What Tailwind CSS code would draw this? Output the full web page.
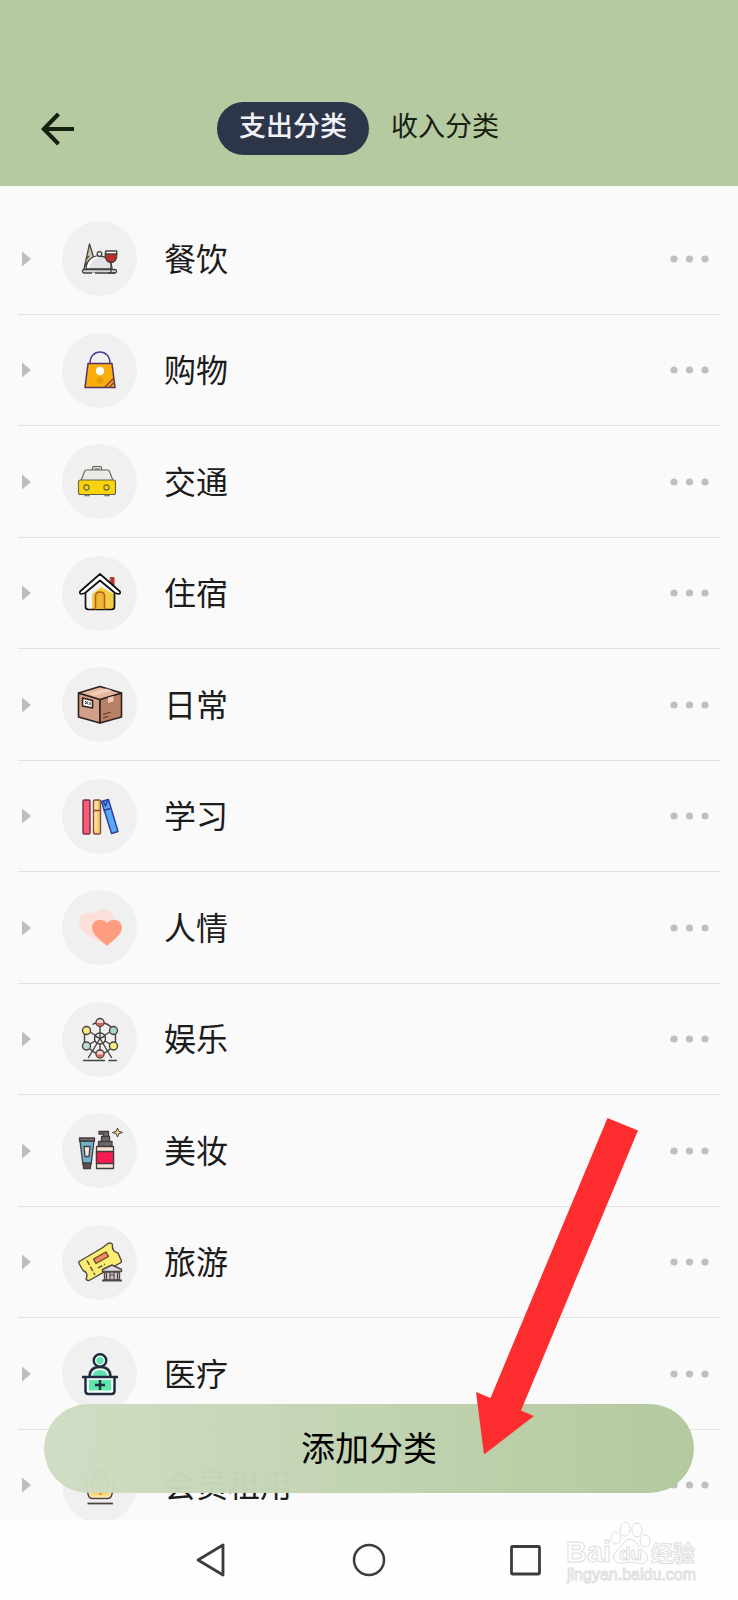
<!DOCTYPE html>
<html lang="zh-CN">
<head>
    <meta charset="UTF-8">
    <meta name="viewport" content="width=device-width, initial-scale=1.0">
    <title>分类管理</title>
    <script src="https://cdn.jsdelivr.net/npm/@tailwindcss/browser@4"></script>
</head>
<body class="relative h-screen flex flex-col overflow-hidden bg-[#fafafa] text-[#1c1c1c] font-['Noto_Sans_CJK_SC',sans-serif]">
    <!-- Header -->
    <header class="flex shrink-0 items-center bg-[#b5caa1] px-[41px] pt-[102px] pb-[31px]">
        <div class="flex-1">
            <button aria-label="返回" class="block">
                <svg width="34" height="34" viewBox="0 0 34 34" fill="none" stroke="#17200f" stroke-width="4"><path d="M33 17H3M17.500 2L2.800 17l14.700 15"/></svg>
            </button>
        </div>
        <nav class="flex text-[27px] leading-[46px]">
            <button class="rounded-full bg-[#2d3549] px-[22px] pb-[7px] font-medium text-[#f2f3f8]">支出分类</button>
            <button class="rounded-full px-[22px] pb-[7px] text-[#17200f]">收入分类</button>
        </nav>
        <div class="flex-1"></div>
    </header>

    <!-- Category list -->
    <main class="relative min-h-0 flex-1 overflow-hidden pt-[17px]">
        <ul id="list" class="mx-[18px]">
            <li class="flex h-[111px] odd:h-[112px] items-center border-b border-[#e2e2e2]">
                <svg class="ml-[4px] shrink-0" width="9" height="16" viewBox="0 0 9 16"><path d="M0 .5L9 8 0 15.500z" fill="#bdbdbd"/></svg>
                <span class="ml-[31px] flex size-[75px] shrink-0 items-center justify-center rounded-full bg-[#f0f0f0]">
                    <svg width="48" height="48" viewBox="0 0 48 48" fill="none" stroke="#45403e" stroke-width="1.300" stroke-linejoin="round">
                        <path d="M8 34L13.500 9l4 13" fill="#cfc5ae"/>
                        <path d="M10 24l3-3M9 30l4-4"/>
                        <path d="M10 34c0-8 6-13 13-13s13 5 13 13z" fill="#e1e3e7"/>
                        <path d="M12 33c1-7 5-10 10-11" stroke="#fff" stroke-width="2"/>
                        <circle cx="23.500" cy="19" r="2.300" fill="#eee"/>
                        <rect x="6.500" y="34.500" width="34" height="3.500" rx="1.700" fill="#d5d6db"/>
                        <path d="M29.500 17h11c1 6-1 10.500-5.500 10.500S28.500 23 29.500 17z" fill="#bd2f2a"/>
                        <path d="M29.700 16h11v3h-11z" fill="#fff"/>
                        <path d="M35 28v9M32 38h7"/>
                        <path d="M16 38.500h3" stroke="#f0f0f0" stroke-width="2"/>
                    </svg>
                </span>
                <span class="ml-[27px] flex-1 pb-[4px] text-[32px] leading-[48px]">餐饮</span>
                <button aria-label="更多" class="mr-[11px]"><svg width="40" height="8" viewBox="0 0 40 8" fill="#bfbfbf"><circle cx="5" cy="4" r="3.600"/><circle cx="20.500" cy="4" r="3.600"/><circle cx="36" cy="4" r="3.600"/></svg></button>
            </li>
            <li class="flex h-[111px] odd:h-[112px] items-center border-b border-[#e2e2e2]">
                <svg class="ml-[4px] shrink-0" width="9" height="16" viewBox="0 0 9 16"><path d="M0 .5L9 8 0 15.500z" fill="#bdbdbd"/></svg>
                <span class="ml-[31px] flex size-[75px] shrink-0 items-center justify-center rounded-full bg-[#f0f0f0]">
                    <svg width="48" height="48" viewBox="0 0 48 48" fill="none" stroke="#553069" stroke-width="1.500" stroke-linejoin="round">
                        <path d="M14 17.500C14 10 18.500 6 24 6s10 4 10 11.500" stroke="#4d3c99"/>
                        <path d="M12 17.500h24L39 41.500H9z" fill="#fbae0b"/>
                        <circle cx="24" cy="25" r="4.200" fill="#fff" stroke="none"/>
                        <circle cx="24" cy="34.500" r="3.500" fill="#e89e0c" stroke="none"/>
                        <path d="M28.500 41.500l9-9M33 41.500l5-5" stroke="#8d3f36"/>
                    </svg>
                </span>
                <span class="ml-[27px] flex-1 pb-[4px] text-[32px] leading-[48px]">购物</span>
                <button aria-label="更多" class="mr-[11px]"><svg width="40" height="8" viewBox="0 0 40 8" fill="#bfbfbf"><circle cx="5" cy="4" r="3.600"/><circle cx="20.500" cy="4" r="3.600"/><circle cx="36" cy="4" r="3.600"/></svg></button>
            </li>
            <li class="flex h-[111px] odd:h-[112px] items-center border-b border-[#e2e2e2]">
                <svg class="ml-[4px] shrink-0" width="9" height="16" viewBox="0 0 9 16"><path d="M0 .5L9 8 0 15.500z" fill="#bdbdbd"/></svg>
                <span class="ml-[31px] flex size-[75px] shrink-0 items-center justify-center rounded-full bg-[#f0f0f0]">
                    <svg width="48" height="48" viewBox="0 0 48 48" fill="none" stroke="#66604e" stroke-width="1.100" stroke-linejoin="round">
                        <path d="M16.500 12v-2.500q0-1 1-1h7q1 0 1 1V12M18.500 11h5" fill="#ddd"/>
                        <path d="M5 22.500L8.500 13.500Q9 12 10.500 12h21q1.500 0 2 1.500L37 22.500" fill="#eaeaea"/>
                        <path d="M9 36.500v1.300h4v-1.300M29 36.500v1.300h4v-1.300"/>
                        <rect x="2.500" y="22" width="37" height="14.500" rx="2" fill="#fad40b"/>
                        <circle cx="10.500" cy="29.500" r="2.600"/><circle cx="30.500" cy="29.500" r="2.600"/>
                    </svg>
                </span>
                <span class="ml-[27px] flex-1 pb-[4px] text-[32px] leading-[48px]">交通</span>
                <button aria-label="更多" class="mr-[11px]"><svg width="40" height="8" viewBox="0 0 40 8" fill="#bfbfbf"><circle cx="5" cy="4" r="3.600"/><circle cx="20.500" cy="4" r="3.600"/><circle cx="36" cy="4" r="3.600"/></svg></button>
            </li>
            <li class="flex h-[111px] odd:h-[112px] items-center border-b border-[#e2e2e2]">
                <svg class="ml-[4px] shrink-0" width="9" height="16" viewBox="0 0 9 16"><path d="M0 .5L9 8 0 15.500z" fill="#bdbdbd"/></svg>
                <span class="ml-[31px] flex size-[75px] shrink-0 items-center justify-center rounded-full bg-[#f0f0f0]">
                    <svg width="48" height="48" viewBox="0 0 48 48" fill="none" stroke="#111" stroke-width="1.700" stroke-linejoin="round" stroke-linecap="round">
                        <path d="M34.500 8.500h3.500v9l-3.500-3.500z" fill="#b73a2e" stroke="#b73a2e" stroke-width="1"/>
                        <path d="M9.500 22L24 11l14.500 11v15.500q0 3-3 3h-23q-3 0-3-3z" fill="#f5f5f5" stroke="none"/>
                        <path d="M16 25l9-7 13 7v12q0 3-3 3H16z" fill="#f0cd42" stroke="none"/>
                        <path d="M9.500 23v14.500q0 3 3 3h23q3 0 3-3V23"/>
                        <path d="M19.500 40V27q0-4 4.500-4t4.500 4v13" stroke="#b95a23" stroke-width="1.500" fill="#edb934"/>
                        <path d="M24 5L4 22.500q-.8 2.300 1.500 2.500L9 24l15-12.500L39 24l3.500 1q2.300-.2 1.500-2.500z" fill="#fff"/>
                    </svg>
                </span>
                <span class="ml-[27px] flex-1 pb-[4px] text-[32px] leading-[48px]">住宿</span>
                <button aria-label="更多" class="mr-[11px]"><svg width="40" height="8" viewBox="0 0 40 8" fill="#bfbfbf"><circle cx="5" cy="4" r="3.600"/><circle cx="20.500" cy="4" r="3.600"/><circle cx="36" cy="4" r="3.600"/></svg></button>
            </li>
            <li class="flex h-[111px] odd:h-[112px] items-center border-b border-[#e2e2e2]">
                <svg class="ml-[4px] shrink-0" width="9" height="16" viewBox="0 0 9 16"><path d="M0 .5L9 8 0 15.500z" fill="#bdbdbd"/></svg>
                <span class="ml-[31px] flex size-[75px] shrink-0 items-center justify-center rounded-full bg-[#f0f0f0]">
                    <svg width="48" height="48" viewBox="0 0 48 48" fill="none" stroke="#2c211c" stroke-width="1.600" stroke-linejoin="round">
                        <path d="M2.500 12L24 18v24L2.500 36z" fill="#d2a088"/>
                        <path d="M45.500 12L24 18v24l21.500-6z" fill="#b98068"/>
                        <path d="M2.500 12L24 5.500 45.500 12 24 18.500z" fill="#e6b79f"/>
                        <path d="M13 12.500l17-5 6 2-17 5z" fill="#f4cdb9" stroke="none"/>
                        <path d="M32 16.500l5.500-1.500v5.500L32 22z" fill="#f4c9b3" stroke="none"/>
                        <path d="M6.500 17l10 2.500V27l-10-2z" fill="#fff"/>
                        <path d="M9 20l3 3.500M9 23l3-2.500M14 21v3" stroke-width="1"/>
                        <path d="M27 33.500l8-2.500M27 37l5.500-1.500" stroke="#5f382b" stroke-width="1.200"/>
                    </svg>
                </span>
                <span class="ml-[27px] flex-1 pb-[4px] text-[32px] leading-[48px]">日常</span>
                <button aria-label="更多" class="mr-[11px]"><svg width="40" height="8" viewBox="0 0 40 8" fill="#bfbfbf"><circle cx="5" cy="4" r="3.600"/><circle cx="20.500" cy="4" r="3.600"/><circle cx="36" cy="4" r="3.600"/></svg></button>
            </li>
            <li class="flex h-[111px] odd:h-[112px] items-center border-b border-[#e2e2e2]">
                <svg class="ml-[4px] shrink-0" width="9" height="16" viewBox="0 0 9 16"><path d="M0 .5L9 8 0 15.500z" fill="#bdbdbd"/></svg>
                <span class="ml-[31px] flex size-[75px] shrink-0 items-center justify-center rounded-full bg-[#f0f0f0]">
                    <svg width="48" height="48" viewBox="0 0 48 48" fill="none" stroke-width="1.400" stroke-linejoin="round">
                        <rect x="7" y="8" width="7" height="34" rx="1.200" fill="#fb5b72" stroke="#743048"/>
                        <rect x="17.500" y="8" width="7" height="34" rx="1.200" fill="#fecb62" stroke="#7b4c49"/>
                        <path d="M18.500 9h3v9h-3zM18.500 20h2.500v19h-2.500z" fill="#ffe09d"/>
                        <path d="M17.500 18.500h7" stroke="#7b4c49"/>
                        <path d="M25.500 9.500l7-2L42 39.500l-6.500 2z" fill="#58a9fb" stroke="#303c96"/>
                        <path d="M27.500 18.500l7-2M27.500 10l2 4 2-5.500" stroke="#303c96"/>
                    </svg>
                </span>
                <span class="ml-[27px] flex-1 pb-[4px] text-[32px] leading-[48px]">学习</span>
                <button aria-label="更多" class="mr-[11px]"><svg width="40" height="8" viewBox="0 0 40 8" fill="#bfbfbf"><circle cx="5" cy="4" r="3.600"/><circle cx="20.500" cy="4" r="3.600"/><circle cx="36" cy="4" r="3.600"/></svg></button>
            </li>
            <li class="flex h-[111px] odd:h-[112px] items-center border-b border-[#e2e2e2]">
                <svg class="ml-[4px] shrink-0" width="9" height="16" viewBox="0 0 9 16"><path d="M0 .5L9 8 0 15.500z" fill="#bdbdbd"/></svg>
                <span class="ml-[31px] flex size-[75px] shrink-0 items-center justify-center rounded-full bg-[#f0f0f0]">
                    <svg width="48" height="48" viewBox="0 0 48 48">
                        <path d="M24 38C14 32 3 29 3 18 3 9 11 8 19 9c5-6 15-5 19 3L30 36z" fill="#fbdfd9"/>
                        <path d="M31 42C25 36 16 31 16 23.500c0-8 10.500-10.500 15-4 4.500-6.500 15-4 15 4C46 31 37 36 31 42z" fill="#fd9c7f"/>
                    </svg>
                </span>
                <span class="ml-[27px] flex-1 pb-[4px] text-[32px] leading-[48px]">人情</span>
                <button aria-label="更多" class="mr-[11px]"><svg width="40" height="8" viewBox="0 0 40 8" fill="#bfbfbf"><circle cx="5" cy="4" r="3.600"/><circle cx="20.500" cy="4" r="3.600"/><circle cx="36" cy="4" r="3.600"/></svg></button>
            </li>
            <li class="flex h-[111px] odd:h-[112px] items-center border-b border-[#e2e2e2]">
                <svg class="ml-[4px] shrink-0" width="9" height="16" viewBox="0 0 9 16"><path d="M0 .5L9 8 0 15.500z" fill="#bdbdbd"/></svg>
                <span class="ml-[31px] flex size-[75px] shrink-0 items-center justify-center rounded-full bg-[#f0f0f0]">
                    <svg width="48" height="48" viewBox="0 0 48 48" fill="none" stroke="#454040" stroke-width="1.400" stroke-linecap="round">
                        <path d="M20 8l-3 1.200M28 8q4 1 7 4M8.500 19v9M39.500 19v9M14 34q3 3 6 4M34 34q-3 3-6 4"/>
                        <path d="M24 11.500V35M14 17l20 12M34 17L14 29"/>
                        <circle cx="24" cy="23.500" r="5.500" fill="#f0f0f0"/>
                        <path d="M24 18v5M19 21l5 2.500 5-2.500"/>
                        <path d="M24 23.500L12.500 42.500M24 23.500l11.500 19M7.500 45.500h21M33 45.500h7.500"/>
                        <circle cx="24" cy="7.500" r="4" fill="#f8d1c8"/><path d="M20.500 8h7q-1 3-3.500 3t-3.500-3z" fill="#d95e50" stroke="none"/>
                        <circle cx="10.500" cy="15.500" r="4" fill="#f8ec82"/>
                        <circle cx="37.500" cy="15.500" r="4" fill="#a9d8c9"/>
                        <circle cx="10.500" cy="31" r="4" fill="#b9ddd5"/>
                        <circle cx="37.500" cy="31" r="4" fill="#f8ec82"/>
                        <circle cx="24" cy="39" r="4" fill="#f8d1c8"/><path d="M20.500 39.500h7q-1 3-3.500 3t-3.500-3z" fill="#dd6a55" stroke="none"/>
                    </svg>
                </span>
                <span class="ml-[27px] flex-1 pb-[4px] text-[32px] leading-[48px]">娱乐</span>
                <button aria-label="更多" class="mr-[11px]"><svg width="40" height="8" viewBox="0 0 40 8" fill="#bfbfbf"><circle cx="5" cy="4" r="3.600"/><circle cx="20.500" cy="4" r="3.600"/><circle cx="36" cy="4" r="3.600"/></svg></button>
            </li>
            <li class="flex h-[111px] odd:h-[112px] items-center border-b border-[#e2e2e2]">
                <svg class="ml-[4px] shrink-0" width="9" height="16" viewBox="0 0 9 16"><path d="M0 .5L9 8 0 15.500z" fill="#bdbdbd"/></svg>
                <span class="ml-[31px] flex size-[75px] shrink-0 items-center justify-center rounded-full bg-[#f0f0f0]">
                    <svg width="48" height="48" viewBox="0 0 48 48" fill="none" stroke="#443b3e" stroke-width="1.300" stroke-linejoin="round">
                        <path d="M4 14h14l-3 24H7z" fill="#6eb2cc"/>
                        <path d="M3.500 11h15v3h-15z" fill="#756d6d"/>
                        <path d="M8 19.500h6l-1 10H9z" fill="#f6e5cf"/>
                        <path d="M7.500 36h7v5.500h-7z" fill="#5d5554"/>
                        <path d="M23 4.500h9.500v5h-5V7H23zM25.500 9.500h8v5h-8zM22.500 14.500h13.500v5H22.500z" fill="#706968"/>
                        <path d="M20.500 19.500h17v22h-17z" fill="#f7e2d3"/>
                        <path d="M20.500 24.500h17v12h-17z" fill="#f81b50"/>
                        <path d="M41.500 1l1.300 3.300L46.500 5.500l-3.700 1.200L41.500 10l-1.300-3.300-3.700-1.200 3.700-1.200z" fill="#ffd98a" stroke-width="1"/>
                    </svg>
                </span>
                <span class="ml-[27px] flex-1 pb-[4px] text-[32px] leading-[48px]">美妆</span>
                <button aria-label="更多" class="mr-[11px]"><svg width="40" height="8" viewBox="0 0 40 8" fill="#bfbfbf"><circle cx="5" cy="4" r="3.600"/><circle cx="20.500" cy="4" r="3.600"/><circle cx="36" cy="4" r="3.600"/></svg></button>
            </li>
            <li class="flex h-[111px] odd:h-[112px] items-center border-b border-[#e2e2e2]">
                <svg class="ml-[4px] shrink-0" width="9" height="16" viewBox="0 0 9 16"><path d="M0 .5L9 8 0 15.500z" fill="#bdbdbd"/></svg>
                <span class="ml-[31px] flex size-[75px] shrink-0 items-center justify-center rounded-full bg-[#f0f0f0]">
                    <svg width="48" height="48" viewBox="0 0 48 48" fill="none" stroke="#514944" stroke-width="1.400" stroke-linejoin="round">
                        <path d="M4 23L26 10l6-4.500q3-1.500 4.500 1-1 7 5.500 8.500l3.500 8q0 1.500-1.500 2L14 42q-2 1.500-4-1 3-6-3-8.500L3 25.500q-.5-2 1-2.500z" fill="#fbed72"/>
                        <path d="M17.500 21l12.500-7 2.500 4.500-12.500 7z" fill="#ee8c5d" stroke="#70462e"/>
                        <path d="M11 22.500L19 37M22 30l7-4" stroke-dasharray="5 2"/>
                        <path d="M26.500 31.500l9.500-4.500 9.500 4.500v2h-19z" fill="#dedbe2"/>
                        <path d="M28.500 34h15v8h-15z" fill="#cac5ce"/>
                        <path d="M30.500 34v8M34 34v8M38 34v8M41.500 34v8M34 37h4" stroke-width="1.100"/>
                        <path d="M26 42.500h20" stroke-width="2"/>
                    </svg>
                </span>
                <span class="ml-[27px] flex-1 pb-[4px] text-[32px] leading-[48px]">旅游</span>
                <button aria-label="更多" class="mr-[11px]"><svg width="40" height="8" viewBox="0 0 40 8" fill="#bfbfbf"><circle cx="5" cy="4" r="3.600"/><circle cx="20.500" cy="4" r="3.600"/><circle cx="36" cy="4" r="3.600"/></svg></button>
            </li>
            <li class="flex h-[111px] odd:h-[112px] items-center border-b border-[#e2e2e2]">
                <svg class="ml-[4px] shrink-0" width="9" height="16" viewBox="0 0 9 16"><path d="M0 .5L9 8 0 15.500z" fill="#bdbdbd"/></svg>
                <span class="ml-[31px] flex size-[75px] shrink-0 items-center justify-center rounded-full bg-[#f0f0f0]">
                    <svg width="48" height="48" viewBox="0 0 48 48" fill="none" stroke="#222c40" stroke-width="2.500">
                        <path d="M13.500 27q0-10 10.500-10t10.500 10" fill="#e9fff4"/>
                        <path d="M16.500 26q1-6 7.500-6t7.500 6z" fill="#5fe0ad" stroke="none"/>
                        <circle cx="24" cy="10.500" r="6.300" fill="#e9fff4"/><circle cx="24" cy="10.500" r="3.600" fill="#63e1b0" stroke="none"/>
                        <path d="M9.500 27v14q0 3 3 3h23q3 0 3-3v-14" fill="#f4fff9"/>
                        <path d="M13 30h22v10.500H13z" fill="#5ee8a9" stroke="none"/>
                        <path d="M6 27h36M24 30v10M19 35h10"/>
                    </svg>
                </span>
                <span class="ml-[27px] flex-1 pb-[4px] text-[32px] leading-[48px]">医疗</span>
                <button aria-label="更多" class="mr-[11px]"><svg width="40" height="8" viewBox="0 0 40 8" fill="#bfbfbf"><circle cx="5" cy="4" r="3.600"/><circle cx="20.500" cy="4" r="3.600"/><circle cx="36" cy="4" r="3.600"/></svg></button>
            </li>
            <li class="flex h-[111px] odd:h-[112px] items-center border-b border-[#e2e2e2]">
                <svg class="ml-[4px] shrink-0" width="9" height="16" viewBox="0 0 9 16"><path d="M0 .5L9 8 0 15.500z" fill="#bdbdbd"/></svg>
                <span class="ml-[31px] flex size-[75px] shrink-0 items-center justify-center rounded-full bg-[#f0f0f0]">
                    <svg width="48" height="48" viewBox="0 0 48 48" fill="none" stroke="#4d4643" stroke-width="1.500" stroke-linejoin="round">
                        <path d="M12 33L8 18q4 1 8 7-1-9 8-17 9 8 8 17 4-6 8-7l-4 15q-1 4.500-4 4.500H16q-3 0-4-4.500z" fill="#fbe9ae"/>
                        <path d="M15 28h18v6.500H15z" fill="#fbd566" stroke="none"/>
                        <circle cx="24.500" cy="32.500" r="1.500" fill="#e58b3a" stroke="none"/>
                        <path d="M11.500 42.500h25.500" stroke-width="1.800"/>
                    </svg>
                </span>
                <span class="ml-[27px] flex-1 pb-[4px] text-[32px] leading-[48px]">会员租用</span>
                <button aria-label="更多" class="mr-[11px]"><svg width="40" height="8" viewBox="0 0 40 8" fill="#bfbfbf"><circle cx="5" cy="4" r="3.600"/><circle cx="20.500" cy="4" r="3.600"/><circle cx="36" cy="4" r="3.600"/></svg></button>
            </li>
        </ul>

        <!-- Floating add button -->
        <button class="absolute inset-x-[44px] bottom-[27px] h-[89px] rounded-full bg-linear-to-r from-[#cfdcc3]/97 to-[#b3c99e] pb-[4px] text-[34px] text-black">添加分类</button>
    </main>

    <!-- System navigation -->
    <nav class="flex h-[80px] shrink-0 items-center justify-center gap-[123px] bg-[#fefefe]">
        <button aria-label="返回上一页"><svg width="34" height="36" viewBox="0 0 34 36" fill="none" stroke="#3c3c3c" stroke-width="2.800" stroke-linejoin="round"><path d="M28 3v30L3 18z"/></svg></button>
        <button aria-label="主屏幕"><svg width="34" height="36" viewBox="0 0 34 36" fill="none" stroke="#3c3c3c" stroke-width="2.500"><circle cx="17" cy="18" r="15"/></svg></button>
        <button aria-label="最近任务"><svg width="34" height="36" viewBox="0 0 34 36" fill="none" stroke="#3c3c3c" stroke-width="2.800"><rect x="2.500" y="4.500" width="28" height="27.500" rx="1"/></svg></button>
    </nav>

    <!-- Pointer arrow -->
    <svg class="pointer-events-none absolute right-[100px] bottom-[145px]" width="162" height="337" viewBox="0 0 162 337"><path d="M131.500 0L162 12.500 45 292.500l13 5.500-50 38.500L0 274l14.500 6z" fill="#fd2c2f"/></svg>

    <!-- Watermark -->
    <svg class="pointer-events-none absolute right-[32px] bottom-[12px]" width="140" height="70" viewBox="0 0 140 70" fill="#fefefe" stroke="#dedede" stroke-width="1">
        <text x="0" y="44" font-family="Liberation Sans" font-weight="bold" font-size="29">Bai</text>
        <ellipse cx="50" cy="20" rx="5" ry="6"/><ellipse cx="59" cy="11" rx="5" ry="7"/><ellipse cx="71" cy="12" rx="5" ry="7"/><ellipse cx="79" cy="23" rx="5" ry="6"/>
        <path d="M64 21q5 0 8 6l7 7q5 6 1 10-4 3-9 1-7-2-14 0-6 1-9-3-2-5 3-9l5-6q3-6 8-6z"/>
        <text x="53" y="42" font-family="Liberation Sans" font-weight="bold" font-size="19">du</text>
        <text x="85" y="43" font-family="Noto Sans CJK SC" font-weight="bold" font-size="22">经验</text>
        <text x="1" y="62" font-family="Liberation Sans" font-size="16">jingyan.baidu.com</text>
    </svg>
</body>
</html>
